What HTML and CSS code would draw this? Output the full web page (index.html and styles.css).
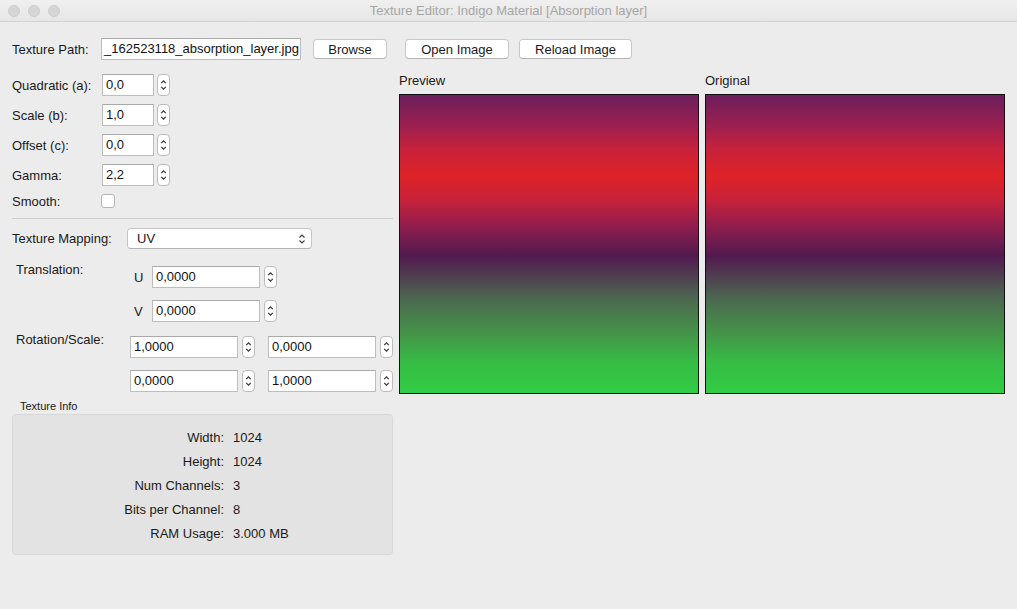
FILE: index.html
```html
<!DOCTYPE html>
<html lang="en">
<head>
    <meta charset="UTF-8">
    <title>Texture Editor: Indigo Material [Absorption layer]</title>
    <link rel="stylesheet" href="styles.css">
</head>
<body>
    <div class="window">
        <div class="titlebar">
            <div class="lights">
                <span class="light"></span>
                <span class="light"></span>
                <span class="light"></span>
            </div>
            <div class="title">Texture Editor: Indigo Material [Absorption layer]</div>
        </div>

        <div class="content">
            <div class="path-row">
                <span class="path-label">Texture Path:</span>
                <div class="field path-field">_162523118_absorption_layer.jpg</div>
                <button class="btn btn-browse">Browse</button>
                <button class="btn btn-open">Open Image</button>
                <button class="btn btn-reload">Reload Image</button>
            </div>

            <div class="main">
                <div class="left">
                    <div class="form-row">
                        <span class="form-label">Quadratic (a):</span>
                        <div class="field spin-field">0,0</div>
                        <span class="stepper"><svg viewBox="0 0 12 21"><path d="M3.5 8.5 6 6l2.5 2.5M3.5 12.5 6 15l2.5-2.5"/></svg></span>
                    </div>
                    <div class="form-row">
                        <span class="form-label">Scale (b):</span>
                        <div class="field spin-field">1,0</div>
                        <span class="stepper"><svg viewBox="0 0 12 21"><path d="M3.5 8.5 6 6l2.5 2.5M3.5 12.5 6 15l2.5-2.5"/></svg></span>
                    </div>
                    <div class="form-row">
                        <span class="form-label">Offset (c):</span>
                        <div class="field spin-field">0,0</div>
                        <span class="stepper"><svg viewBox="0 0 12 21"><path d="M3.5 8.5 6 6l2.5 2.5M3.5 12.5 6 15l2.5-2.5"/></svg></span>
                    </div>
                    <div class="form-row">
                        <span class="form-label">Gamma:</span>
                        <div class="field spin-field">2,2</div>
                        <span class="stepper"><svg viewBox="0 0 12 21"><path d="M3.5 8.5 6 6l2.5 2.5M3.5 12.5 6 15l2.5-2.5"/></svg></span>
                    </div>
                    <div class="form-row smooth-row">
                        <span class="form-label">Smooth:</span>
                        <span class="checkbox"></span>
                    </div>

                    <div class="separator"></div>

                    <div class="mapping-row">
                        <span class="mapping-label">Texture Mapping:</span>
                        <div class="combo">
                            <span>UV</span>
                            <svg viewBox="0 0 10 14"><path d="M2.5 5.5 5 3l2.5 2.5M2.5 8.5 5 11l2.5-2.5"/></svg>
                        </div>
                    </div>

                    <div class="sub-block">
                        <span class="sub-label">Translation:</span>
                        <div class="sub-fields">
                            <div class="uv-row">
                                <span class="uv-label">U</span>
                                <div class="field vec-field">0,0000</div>
                                <span class="stepper"><svg viewBox="0 0 12 21"><path d="M3.5 8.5 6 6l2.5 2.5M3.5 12.5 6 15l2.5-2.5"/></svg></span>
                            </div>
                            <div class="uv-row">
                                <span class="uv-label">V</span>
                                <div class="field vec-field">0,0000</div>
                                <span class="stepper"><svg viewBox="0 0 12 21"><path d="M3.5 8.5 6 6l2.5 2.5M3.5 12.5 6 15l2.5-2.5"/></svg></span>
                            </div>
                        </div>
                    </div>

                    <div class="sub-block rot-block">
                        <span class="sub-label">Rotation/Scale:</span>
                        <div class="matrix">
                            <div class="cell">
                                <div class="field vec-field">1,0000</div>
                                <span class="stepper"><svg viewBox="0 0 12 21"><path d="M3.5 8.5 6 6l2.5 2.5M3.5 12.5 6 15l2.5-2.5"/></svg></span>
                            </div>
                            <div class="cell">
                                <div class="field vec-field">0,0000</div>
                                <span class="stepper"><svg viewBox="0 0 12 21"><path d="M3.5 8.5 6 6l2.5 2.5M3.5 12.5 6 15l2.5-2.5"/></svg></span>
                            </div>
                            <div class="cell">
                                <div class="field vec-field">0,0000</div>
                                <span class="stepper"><svg viewBox="0 0 12 21"><path d="M3.5 8.5 6 6l2.5 2.5M3.5 12.5 6 15l2.5-2.5"/></svg></span>
                            </div>
                            <div class="cell">
                                <div class="field vec-field">1,0000</div>
                                <span class="stepper"><svg viewBox="0 0 12 21"><path d="M3.5 8.5 6 6l2.5 2.5M3.5 12.5 6 15l2.5-2.5"/></svg></span>
                            </div>
                        </div>
                    </div>

                    <div class="info-title">Texture Info</div>
                    <div class="info-box">
                        <span class="info-key">Width:</span><span>1024</span>
                        <span class="info-key">Height:</span><span>1024</span>
                        <span class="info-key">Num Channels:</span><span>3</span>
                        <span class="info-key">Bits per Channel:</span><span>8</span>
                        <span class="info-key">RAM Usage:</span><span>3.000 MB</span>
                    </div>
                </div>

                <div class="previews">
                    <div class="preview">
                        <div class="preview-label">Preview</div>
                        <div class="swatch"></div>
                    </div>
                    <div class="preview">
                        <div class="preview-label">Original</div>
                        <div class="swatch"></div>
                    </div>
                </div>
            </div>
        </div>
    </div>
</body>
</html>
```

FILE: styles.css
```css
* {
    margin: 0;
    padding: 0;
    box-sizing: border-box;
}

body {
    font-family: "Liberation Sans", Arial, sans-serif;
    font-size: 13px;
    color: #1a1a1a;
    background: #ececec;
    width: 1017px;
    height: 609px;
    overflow: hidden;
}

.window {
    height: 609px;
    background: #ececec;
}

/* title bar */

.titlebar {
    height: 22px;
    background: linear-gradient(to bottom, #f0f0f0, #e6e6e6);
    border-bottom: 1px solid #d3d3d3;
    display: flex;
    align-items: center;
    position: relative;
}

.lights {
    display: flex;
    gap: 8px;
    padding-left: 8px;
}

.light {
    width: 12px;
    height: 12px;
    border-radius: 50%;
    background: #d6d6d6;
    border: 1px solid #cbcbcb;
}

.title {
    position: absolute;
    left: 0;
    right: 0;
    text-align: center;
    color: #a6a6a6;
    font-size: 13px;
}

.content {
    padding: 16px 0 0 12px;
}

/* controls */

.field {
    background: #fff;
    border: 1px solid #bdbdbd;
    border-top-color: #a9a9a9;
    height: 22px;
    line-height: 20px;
    padding-left: 3px;
    white-space: nowrap;
    overflow: hidden;
    color: #111;
}

.stepper {
    width: 13px;
    height: 22px;
    margin-left: 3px;
    background: #fff;
    border: 1px solid #bcbcbc;
    border-radius: 4px;
    display: flex;
    justify-content: center;
    align-items: center;
}

.stepper svg {
    width: 11px;
    height: 20px;
    fill: none;
    stroke: #333;
    stroke-width: 1.3;
}

.btn {
    font-family: inherit;
    font-size: 13px;
    color: #1a1a1a;
    background: #fff;
    border: 1px solid #c8c8c8;
    border-bottom-color: #b3b3b3;
    border-radius: 4px;
    height: 20px;
}

/* path row */

.path-row {
    display: flex;
    align-items: center;
    height: 22px;
}

.path-label {
    width: 89px;
}

.path-field {
    width: 200px;
    padding-left: 2px;
}

.btn-browse {
    width: 74px;
    margin-left: 12px;
}

.btn-open {
    width: 104px;
    margin-left: 18px;
}

.btn-reload {
    width: 113px;
    margin-left: 10px;
}

.main {
    display: flex;
    margin-top: 14px;
}

/* left column */

.left {
    width: 381px;
}

.form-row {
    display: flex;
    align-items: center;
    height: 22px;
    margin-bottom: 8px;
}

.form-label {
    width: 90px;
}

.spin-field {
    width: 52px;
}

.smooth-row {
    height: 14px;
}

.checkbox {
    width: 14px;
    height: 14px;
    margin-left: -1px;
    background: #fff;
    border: 1px solid #b5b5b5;
    border-radius: 3px;
}

.separator {
    height: 1px;
    background: #cfcfcf;
    margin-top: 10px;
}

.mapping-row {
    display: flex;
    align-items: center;
    margin-top: 9px;
}

.mapping-label {
    width: 115px;
}

.combo {
    width: 185px;
    height: 21px;
    background: #fff;
    border: 1px solid #c6c6c6;
    border-bottom-color: #b3b3b3;
    border-radius: 4px;
    display: flex;
    align-items: center;
    justify-content: space-between;
    padding: 0 4px 0 9px;
}

.combo svg {
    width: 10px;
    height: 14px;
    fill: none;
    stroke: #444;
    stroke-width: 1.2;
}

.sub-block {
    display: flex;
    margin-top: 17px;
}

.sub-label {
    width: 118px;
    padding-left: 4px;
    line-height: 14px;
    margin-top: -3px;
}

.sub-fields {
    display: flex;
    flex-direction: column;
    gap: 12px;
}

.uv-row {
    display: flex;
    align-items: center;
}

.uv-label {
    width: 22px;
    padding-left: 4px;
}

.vec-field {
    width: 108px;
}

.vec-field + .stepper {
    margin-left: 4px;
}

.rot-block {
    margin-top: 14px;
}

.rot-block .sub-label {
    margin-top: -3px;
}

.matrix {
    display: grid;
    grid-template-columns: 125px 125px;
    column-gap: 13px;
    row-gap: 12px;
}

.cell {
    display: flex;
    align-items: center;
}

.info-title {
    font-size: 11px;
    margin: 8px 0 0 8px;
    height: 13px;
    line-height: 13px;
}

.info-box {
    margin-top: 1px;
    height: 141px;
    background: #e3e3e3;
    border: 1px solid #d8d8d8;
    border-radius: 4px;
    display: grid;
    grid-template-columns: 211px auto;
    column-gap: 9px;
    grid-auto-rows: 24px;
    align-items: center;
    padding-top: 10px;
}

.info-key {
    text-align: right;
}

/* previews */

.previews {
    display: flex;
    gap: 6px;
    margin-left: 6px;
}

.preview-label {
    height: 20px;
    line-height: 14px;
}

.swatch {
    width: 300px;
    height: 300px;
    border: 1px solid #111;
    background: linear-gradient(to bottom,
        #6b1f5c 0%,
        #9a1f50 10%,
        #c6223c 18%,
        #de2327 27%,
        #c9223a 35%,
        #8a1d4e 45%,
        #521a4f 54%,
        #4f4550 62%,
        #4c6650 68%,
        #459448 80%,
        #36bd45 90%,
        #31cc44 100%);
}
```
